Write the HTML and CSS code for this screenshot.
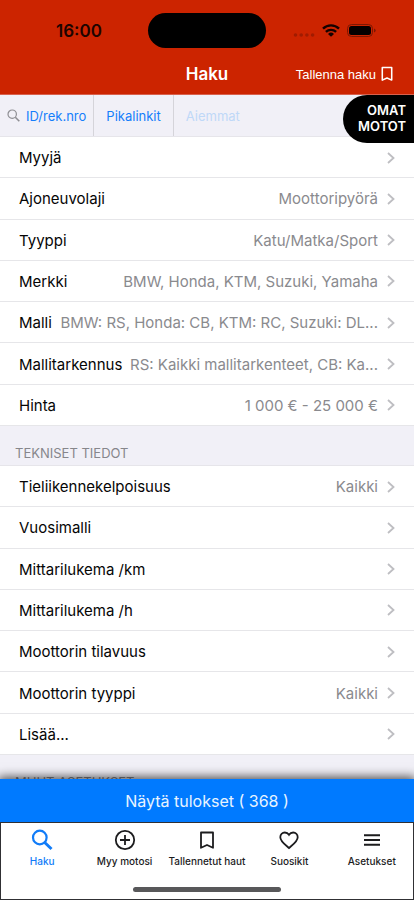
FILE: index.html
```html
<!DOCTYPE html>
<html lang="fi">
<head>
<meta charset="utf-8">
<meta name="viewport" content="width=device-width, initial-scale=1">
<title>Haku</title>
<link rel="stylesheet" href="styles.css">
</head>
<body>
<svg class="defs" aria-hidden="true">
  <symbol id="chevron" viewBox="0 0 8 12"><path d="M1 1l5.500 5L1 11" fill="none" stroke="currentColor" stroke-width="1.800"/></symbol>
  <symbol id="bookmark" viewBox="0 0 14 18"><path d="M1.500 1.500h11v14.600L7 13.600l-5.500 2.500z" fill="none" stroke="currentColor" stroke-width="1.800" stroke-linejoin="round"/></symbol>
</svg>
<div class="app">
  <header class="top">
    <div class="status">
      <time class="clock">16:00</time>
      <div class="island"></div>
      <div class="signals">
        <svg class="dots" viewBox="0 0 22 4" aria-hidden="true"><g fill="#a01c01"><circle cx="2.500" cy="2" r="1.800"/><circle cx="8.200" cy="2" r="1.800"/><circle cx="13.900" cy="2" r="1.800"/><circle cx="19.600" cy="2" r="1.800"/></g></svg>
        <svg class="wifi" viewBox="0 0 18 13" aria-hidden="true"><g fill="none" stroke="#140200" stroke-width="2.400"><path d="M1 4.600a11.500 11.500 0 0 1 16 0"/><path d="M3.900 7.900a7.400 7.400 0 0 1 10.200 0"/></g><path d="M9 12.800L6 9.900a4.300 4.300 0 0 1 6 0z" fill="#140200"/></svg>
        <svg class="battery" viewBox="0 0 29 13" aria-hidden="true"><rect x=".5" y=".5" width="25" height="12" rx="4" fill="none" stroke="#7d1702"/><rect x="2" y="2" width="22" height="9" rx="2.500" fill="#050000"/><path d="M27 4.500q1.700.6 1.700 2t-1.700 2z" fill="#7d1702"/></svg>
      </div>
    </div>
    <div class="nav">
      <h1 class="title">Haku</h1>
      <button class="save" type="button">Tallenna haku <svg class="save-icon" aria-hidden="true"><use href="#bookmark"/></svg></button>
    </div>
  </header>

  <main class="content">
    <div class="quick">
      <button class="quick-item" type="button"><svg class="quick-icon" viewBox="0 0 13 13" aria-hidden="true"><g fill="none" stroke="#8e8e93" stroke-width="1.200"><circle cx="5.200" cy="5.200" r="4.200"/><path d="M8.300 8.300l4 4" stroke-width="1.600"/></g></svg>ID/rek.nro</button>
      <button class="quick-item" type="button">Pikalinkit</button>
      <button class="quick-item" type="button" disabled>Aiemmat</button>
      <a class="own" href="#omat">OMAT<br>MOTOT</a>
    </div>

    <div class="group">
      <button class="row" type="button"><span class="label">Myyjä</span><span class="value"></span><svg class="chev" aria-hidden="true"><use href="#chevron"/></svg></button>
      <button class="row" type="button"><span class="label">Ajoneuvolaji</span><span class="value">Moottoripyörä</span><svg class="chev" aria-hidden="true"><use href="#chevron"/></svg></button>
      <button class="row" type="button"><span class="label">Tyyppi</span><span class="value">Katu/Matka/Sport</span><svg class="chev" aria-hidden="true"><use href="#chevron"/></svg></button>
      <button class="row" type="button"><span class="label">Merkki</span><span class="value">BMW, Honda, KTM, Suzuki, Yamaha</span><svg class="chev" aria-hidden="true"><use href="#chevron"/></svg></button>
      <button class="row" type="button"><span class="label">Malli</span><span class="value">BMW: RS, Honda: CB, KTM: RC, Suzuki: DL...</span><svg class="chev" aria-hidden="true"><use href="#chevron"/></svg></button>
      <button class="row" type="button"><span class="label">Mallitarkennus</span><span class="value">RS: Kaikki mallitarkenteet, CB: Ka...</span><svg class="chev" aria-hidden="true"><use href="#chevron"/></svg></button>
      <button class="row" type="button"><span class="label">Hinta</span><span class="value">1 000 € - 25 000 €</span><svg class="chev" aria-hidden="true"><use href="#chevron"/></svg></button>
    </div>

    <h2 class="section">TEKNISET TIEDOT</h2>
    <div class="group">
      <button class="row" type="button"><span class="label">Tieliikennekelpoisuus</span><span class="value">Kaikki</span><svg class="chev" aria-hidden="true"><use href="#chevron"/></svg></button>
      <button class="row" type="button"><span class="label">Vuosimalli</span><span class="value"></span><svg class="chev" aria-hidden="true"><use href="#chevron"/></svg></button>
      <button class="row" type="button"><span class="label">Mittarilukema /km</span><span class="value"></span><svg class="chev" aria-hidden="true"><use href="#chevron"/></svg></button>
      <button class="row" type="button"><span class="label">Mittarilukema /h</span><span class="value"></span><svg class="chev" aria-hidden="true"><use href="#chevron"/></svg></button>
      <button class="row" type="button"><span class="label">Moottorin tilavuus</span><span class="value"></span><svg class="chev" aria-hidden="true"><use href="#chevron"/></svg></button>
      <button class="row" type="button"><span class="label">Moottorin tyyppi</span><span class="value">Kaikki</span><svg class="chev" aria-hidden="true"><use href="#chevron"/></svg></button>
      <button class="row" type="button"><span class="label">Lisää...</span><span class="value"></span><svg class="chev" aria-hidden="true"><use href="#chevron"/></svg></button>
    </div>

    <h2 class="section">MUUT ASETUKSET</h2>
  </main>

  <footer class="bottom">
    <button class="results" type="button">Näytä tulokset ( 368 )</button>
    <div class="dock">
      <nav class="tabs">
        <a class="tab active" href="#haku"><svg class="tab-icon" viewBox="0 0 22 22" aria-hidden="true"><g fill="none" stroke="currentColor"><circle cx="8.800" cy="8.500" r="6.800" stroke-width="2.200"/><path d="M13.200 13l7.300 7" stroke-width="3"/></g></svg>Haku</a>
        <a class="tab" href="#myy"><svg class="tab-icon" viewBox="0 0 22 22" aria-hidden="true"><g fill="none" stroke="currentColor" stroke-width="1.800"><circle cx="11" cy="11" r="9.200"/><path d="M11 6v10M6 11h10"/></g></svg>Myy motosi</a>
        <a class="tab" href="#tallennetut"><svg class="tab-icon" viewBox="0 0 22 22" aria-hidden="true"><path d="M5 3.500h12v15.300L11 16l-6 2.800z" fill="none" stroke="currentColor" stroke-width="1.800" stroke-linejoin="round"/></svg>Tallennetut haut</a>
        <a class="tab" href="#suosikit"><svg class="tab-icon" viewBox="0 0 22 22" aria-hidden="true"><path d="M11 19C8.500 16.700 2.300 12.600 2.300 8.200c0-2.700 2-4.700 4.500-4.700 1.700 0 3.300.9 4.200 2.300.9-1.400 2.500-2.300 4.200-2.300 2.500 0 4.500 2 4.500 4.700C19.700 12.600 13.500 16.700 11 19z" fill="none" stroke="currentColor" stroke-width="1.800"/></svg>Suosikit</a>
        <a class="tab" href="#asetukset"><svg class="tab-icon" viewBox="0 0 22 22" aria-hidden="true"><path d="M3 6.200h16M3 11h16M3 15.800h16" fill="none" stroke="currentColor" stroke-width="2"/></svg>Asetukset</a>
      </nav>
      <div class="home"></div>
    </div>
  </footer>
</div>
</body>
</html>
```
FILE: styles.css
```css
* { box-sizing: border-box; }

body {
  margin: 0;
  background: #f1f0f7;
  color: #050505;
  font-family: Inter, "Liberation Sans", sans-serif;
  font-size: 15px;
}

button {
  margin: 0;
  padding: 0;
  border: 0;
  background: none;
  color: inherit;
  font: inherit;
}

a { color: inherit; text-decoration: none; }

.defs { display: none; }

.app {
  display: flex;
  flex-direction: column;
  height: 100vh;
}

/* Header */
.top {
  flex: none;
  background: #cc2400;
  border-bottom: 1px solid #d9604c;
}

.status {
  display: grid;
  grid-template-columns: 1fr 118px 1fr;
  align-items: center;
  padding-top: 13px;
}

.clock {
  justify-self: center;
  padding-left: 10px;
  color: #1d0400;
  font-size: 17px;
  font-weight: 600;
}

.island {
  height: 35px;
  border-radius: 18px;
  background: #000;
}

.signals {
  display: flex;
  align-items: center;
  gap: 7px;
  padding-left: 27px;
}

.dots { width: 22px; height: 4px; margin-top: 8px; }
.wifi { width: 18px; height: 13px; }
.battery { width: 29px; height: 13px; }

.nav {
  display: grid;
  grid-template-columns: 1fr auto 1fr;
  align-items: center;
  height: 46px;
  padding: 6px 21px 0;
  color: #fff;
}

.title {
  grid-column: 2;
  margin: 0;
  font-size: 17px;
  font-weight: 600;
}

.save {
  display: flex;
  align-items: center;
  justify-self: end;
  gap: 5px;
  font-family: "Liberation Sans", sans-serif;
  font-size: 13px;
  white-space: nowrap;
}

.save-icon { width: 12px; height: 16px; }

/* Scrolling content */
.content {
  flex: 1;
  min-height: 0;
  overflow: auto;
  scrollbar-width: none;
}

.quick {
  position: relative;
  display: flex;
  height: 42px;
  border-bottom: 1px solid #e6e5ea;
}

.quick-item {
  display: flex;
  align-items: center;
  gap: 6px;
  padding: 0 12px;
  border-right: 1px solid #d5d4da;
  color: #157efb;
  font-size: 13px;
}

.quick-item:first-child { padding: 0 7px; }
.quick-item:disabled { border-right: 0; color: #bfd8f8; }
.quick-icon { width: 13px; height: 13px; }

.own {
  position: absolute;
  top: 0;
  right: 0;
  z-index: 1;
  padding: 7px 8px 9px 15px;
  border-radius: 24px 0 0 24px;
  background: #000;
  color: #fff;
  font-size: 13px;
  font-weight: 600;
  line-height: 16px;
  text-align: right;
}

.group {
  display: grid;
  grid-auto-rows: 1fr;
  min-height: 289px;
  background: #fff;
}

.row {
  display: flex;
  align-items: center;
  gap: 6px;
  min-width: 0;
  padding: 1px 19px 0;
  border-bottom: 1px solid #e6e6e9;
  text-align: left;
}

.label { flex: none; }

.value {
  flex: 1;
  min-width: 0;
  overflow: hidden;
  color: #8a8a8e;
  text-align: right;
  text-overflow: ellipsis;
  white-space: nowrap;
}

.chev {
  flex: none;
  width: 8px;
  height: 12px;
  margin-left: 3px;
  color: #bebec2;
}

.section {
  height: 40px;
  margin: 0;
  padding: 18px 15px 0;
  border-bottom: 1px solid #e6e5ea;
  color: #86868b;
  font-size: 13px;
  font-weight: 400;
  line-height: 18px;
}

/* Footer */
.bottom {
  position: relative;
  flex: none;
}

.results {
  display: block;
  width: 100%;
  height: 43px;
  background: #007aff;
  box-shadow: 0 0 10px 2px rgba(0, 0, 0, 0.7);
  color: #e8f4ff;
  font-size: 16px;
}

.dock {
  position: relative;
  height: 78px;
  border: 1px solid #303034;
  background: #fff;
}

.tabs {
  display: grid;
  grid-template-columns: repeat(5, 1fr);
  padding-top: 6px;
}

.tab {
  display: flex;
  flex-direction: column;
  align-items: center;
  gap: 4px;
  color: #1c1c1e;
  font-size: 10px;
  font-weight: 500;
  line-height: 12px;
  white-space: nowrap;
}

.tab.active { color: #117cf8; }
.tab-icon { width: 22px; height: 22px; }

.home {
  width: 36%;
  height: 5px;
  margin: 20px auto 0;
  border-radius: 3px;
  background: #58585a;
}
```
